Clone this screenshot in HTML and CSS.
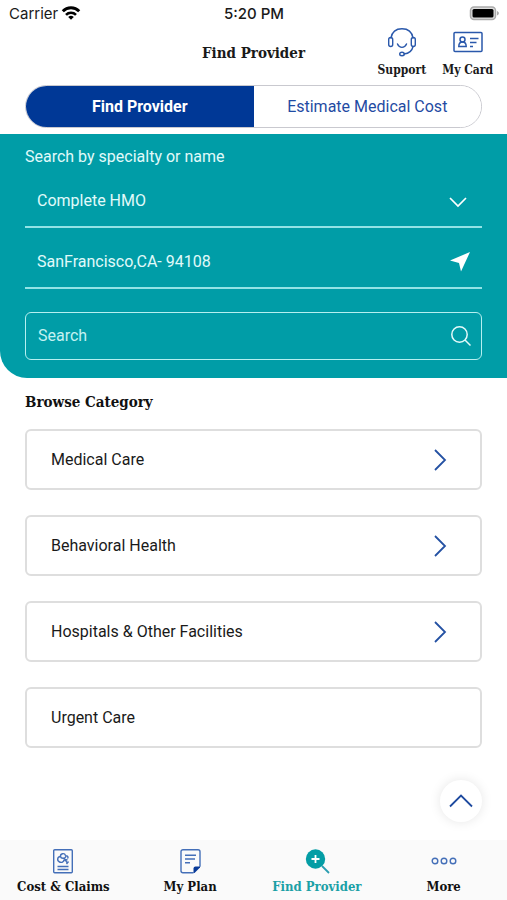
FILE: index.html
```html
<!DOCTYPE html>
<html lang="en">
<head>
<meta charset="utf-8">
<meta name="viewport" content="width=device-width, initial-scale=1">
<title>Find Provider</title>
<link rel="stylesheet" href="styles.css">
</head>
<body>
<div class="status">
  <div class="carrier">Carrier
    <svg width="20" height="16" viewBox="0 0 20 16" fill="none" stroke="#000" stroke-width="3"><path d="M1.8 5.200a11.6 11.6 0 0 1 16.4 0"/><path d="M5 8.800a7 7 0 0 1 10 0" stroke-width="2.6"/><path d="M10 13.800 7.2 11a4 4 0 0 1 5.6 0Z" fill="#000" stroke="none"/></svg>
  </div>
  <div class="time">5:20 PM</div>
  <svg class="battery" width="30" height="16" viewBox="0 0 30 16"><rect x="1.500" y="1" width="25" height="12.500" rx="3.500" fill="#ddd" stroke="#aaa" stroke-width="1.500"/><rect x="3.500" y="3" width="21" height="8.500" rx="1.500"/><path d="M28 5c2.500 1 2.500 3.500 0 4.500Z" fill="#aaa"/></svg>
</div>

<header class="header">
  <h1>Find Provider</h1>
  <nav class="actions" aria-label="Shortcuts">
    <a href="#support">
      <svg width="30" height="30" viewBox="0 0 30 30" fill="none" stroke="#2a58ab" stroke-width="1.400" stroke-linecap="round"><path d="M4 10C5 4 9 .800 15 .800S25 4 26 10"/><rect x="1.700" y="9.500" width="4" height="9" rx="2"/><rect x="24.300" y="9.500" width="4" height="9" rx="2"/><path d="M10.500 16c2 4.500 7 4.500 9 0M26 18.500c-1 5-4 7-9 7.500"/><ellipse cx="15" cy="26" rx="2.300" ry="1.800"/></svg>
      Support
    </a>
    <a href="#card">
      <svg width="30" height="30" viewBox="0 0 30 30" fill="none" stroke="#2a58ab" stroke-width="1.500"><rect x="1" y="4.500" width="28" height="19" rx="1"/><circle cx="9.500" cy="11.500" r="2.500"/><path d="M5.800 18.500c0-6 7.400-6 7.400 0ZM17 10.500h8.500M17 14.500h6.500M17 18.500h3"/></svg>
      My Card
    </a>
  </nav>
</header>

<div class="tabs" role="tablist">
  <button type="button" role="tab" aria-selected="true">Find Provider</button>
  <button type="button" role="tab" aria-selected="false">Estimate Medical Cost</button>
</div>

<form class="panel">
  <p class="hint">Search by specialty or name</p>
  <div class="field">
    <select aria-label="Plan"><option>Complete HMO</option></select>
    <svg width="24" height="20" viewBox="0 0 24 20" fill="none" stroke="#fff" stroke-width="1.700"><path d="m2 7 8 8 8-8"/></svg>
  </div>
  <div class="field">
    <input type="text" aria-label="Location" value="SanFrancisco,CA- 94108">
    <svg width="24" height="20" viewBox="0 0 24 20"><path d="M22 0 2 8.500l9 2.500 2 8.500Z" fill="#fff"/></svg>
  </div>
  <div class="search">
    <input type="search" aria-label="Search" placeholder="Search">
    <svg width="20" height="20" viewBox="0 0 20 20" fill="none" stroke="#e4fafa" stroke-width="1.500"><circle cx="8.500" cy="8.500" r="7.700"/><path d="m14 14 5.500 5.500"/></svg>
  </div>
</form>

<main class="browse">
  <h2>Browse Category</h2>
  <ul>
    <li><a href="#medical">Medical Care <svg width="14" height="22" viewBox="0 0 14 22"><path d="m2 1 10 10L2 21"/></svg></a></li>
    <li><a href="#behavioral">Behavioral Health <svg width="14" height="22" viewBox="0 0 14 22"><path d="m2 1 10 10L2 21"/></svg></a></li>
    <li><a href="#hospitals">Hospitals &amp; Other Facilities <svg width="14" height="22" viewBox="0 0 14 22"><path d="m2 1 10 10L2 21"/></svg></a></li>
    <li><a href="#urgent">Urgent Care</a></li>
  </ul>
</main>

<button class="to-top" type="button" aria-label="Back to top">
  <svg width="24" height="14" viewBox="0 0 24 14" fill="none" stroke="#1e4a9f" stroke-width="1.800"><path d="m1 12.500 11-11 11 11"/></svg>
</button>

<nav class="tabbar" aria-label="Main">
  <a href="#claims">
    <svg width="26" height="26" viewBox="0 0 26 26" fill="none" stroke="#446fb8" stroke-width="1.400"><rect x="3.700" y="1.700" width="18.600" height="23" rx="1"/><path d="M7.500 18.500h11M7.500 21.500h11"/><path d="M15.500 7.500c-1-3-5.500-2-5 1-3 0-4 4-1 5.500 2 1 4.500 0 4.500-2.500M10.500 8.500c.5 2.500 5 2.500 5.500-.5 2-.5 2.500 1.500 1.500 2.500M14.500 10.500l3 5M17.500 11.500l-3 1M18.500 13.500l-2 2.500"/></svg>
    Cost &amp; Claims
  </a>
  <a href="#plan">
    <svg width="26" height="26" viewBox="0 0 26 26" fill="none" stroke="#446fb8" stroke-width="1.400"><path d="M16.500 24.700H6a2 2 0 0 1-2-2v-19a2 2 0 0 1 2-2h15a2 2 0 0 1 2 2v15"/><path d="M23 18.500v1l-5.500 5.500h-1v-4.500a2 2 0 0 1 2-2Z" fill="#093a98" stroke="none"/><path d="M8 7.300h11M8 11h10M8 14.700h5"/></svg>
    My Plan
  </a>
  <a href="#provider" aria-current="page">
    <svg width="26" height="26" viewBox="0 0 26 26" fill="none"><circle cx="11.500" cy="11" r="9.700" fill="#049da5"/><path d="M11.500 7v8M7.500 11h8" stroke="#fff" stroke-width="1.800"/><path d="m18 18 7 7" stroke="#2a9db0" stroke-width="1.800"/></svg>
    Find Provider
  </a>
  <a href="#more">
    <svg width="26" height="26" viewBox="0 0 26 26" fill="none" stroke="#446fb8" stroke-width="1.400"><circle cx="4" cy="13" r="2.800"/><circle cx="13" cy="13" r="2.800"/><circle cx="22" cy="13" r="2.800"/></svg>
    More
  </a>
</nav>
</body>
</html>
```
FILE: styles.css
```css
* { box-sizing: border-box; }

:root {
  --blue: #003896;
  --teal: #009da7;
  --slab: "Roboto Slab", "DejaVu Serif Condensed", "DejaVu Serif", serif;
}

body {
  margin: 0;
  min-height: 100vh;
  display: flex;
  flex-direction: column;
  background: #fff;
  color: #1a1a1a;
  font: 16px/20px Roboto, sans-serif;
}

h1, h2, p, ul { margin: 0; padding: 0; }
ul { list-style: none; }
a { color: inherit; text-decoration: none; }
svg { display: block; flex: none; }
button, input, select { font: inherit; color: inherit; margin: 0; }

.status {
  display: grid;
  grid-template-columns: 1fr auto 1fr;
  align-items: center;
  height: 28px;
  padding: 0 8px 0 9px;
  font: 15px/20px Inter, sans-serif;
}
.carrier { display: flex; align-items: center; gap: 3px; }
.time { font-weight: 500; }
.battery { justify-self: end; }

.header {
  display: grid;
  grid-template-columns: 1fr auto 1fr;
  height: 57px;
  padding: 0 14px;
}
h1 {
  grid-column: 2;
  padding-top: 15px;
  font: bold 15px/20px var(--slab);
}
.actions {
  display: flex;
  justify-content: flex-end;
  gap: 16px;
}
.actions a {
  display: flex;
  flex-direction: column;
  align-items: center;
  gap: 4px;
  font: bold 12px/16px var(--slab);
  white-space: nowrap;
}

.tabs {
  display: flex;
  height: 43px;
  margin: 0 25px 6px;
  border: 1px solid #c9c9cf;
  border-radius: 22px;
  overflow: hidden;
}
.tabs button {
  flex: 1;
  padding: 0;
  border: 0;
  background: #fff;
  color: #1f4ba3;
}
.tabs [aria-selected="true"] {
  background: var(--blue);
  color: #fff;
  font-weight: bold;
}

.panel {
  padding: 13px 25px 18px;
  border-bottom-left-radius: 27px;
  background: var(--teal);
  color: #e0fafa;
}
.field {
  display: flex;
  align-items: center;
  height: 52px;
  margin-top: 9px;
  padding: 0 10px 0 12px;
  border-bottom: 2px solid #92e3e6;
}
.field select, .field input, .search input {
  flex: 1;
  min-width: 0;
  padding: 0;
  border: 0;
  outline: 0;
  background: none;
  appearance: none;
}
.search {
  display: flex;
  align-items: center;
  height: 48px;
  margin-top: 23px;
  padding: 0 10px 0 12px;
  border: 1px solid #b5f0f0;
  border-radius: 6px;
}
.search input::placeholder { color: #c4f2f2; opacity: 1; }

.browse { flex: 1; padding: 12px 25px 24px; }
h2 { font: bold 15px/24px var(--slab); color: #111; }
.browse ul { display: grid; gap: 25px; margin-top: 15px; }
.browse li a {
  display: flex;
  align-items: center;
  justify-content: space-between;
  height: 61px;
  padding: 0 33px 0 24px;
  border: 2px solid #dedede;
  border-radius: 6px;
}
.browse li svg { fill: none; stroke: #2451a3; stroke-width: 1.8; }

.to-top {
  position: fixed;
  right: 25px;
  bottom: 78px;
  display: grid;
  place-items: center;
  width: 42px;
  height: 42px;
  padding: 0;
  border: 0;
  border-radius: 50%;
  background: #fff;
  box-shadow: 0 0 12px rgba(0, 0, 0, 0.1);
}

.tabbar {
  position: sticky;
  bottom: 0;
  display: grid;
  grid-template-columns: repeat(4, 1fr);
  height: 60px;
  padding-top: 8px;
  background: #fafafa;
}
.tabbar a {
  display: flex;
  flex-direction: column;
  align-items: center;
  gap: 5px;
  font: bold 13px/16px var(--slab);
  color: #111;
}
.tabbar [aria-current="page"] { color: #1ba0a6; }
```
